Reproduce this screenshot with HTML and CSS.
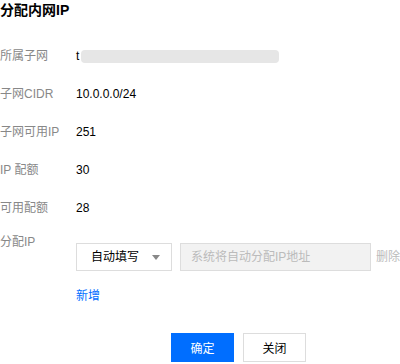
FILE: index.html
```html
<!DOCTYPE html>
<html lang="zh-CN">
<head>
    <meta charset="UTF-8">
    <meta name="viewport" content="width=device-width, initial-scale=1.0">
    <title>分配内网IP</title>
    <link rel="stylesheet" href="styles.css">
</head>
<body>

    <div class="dialog">
        <h2 class="dialog-title">分配内网IP</h2>

        <!-- Subnet info -->
        <div class="form-list">
            <div class="form-row">
                <label class="form-label">所属子网</label>
                <div class="form-value">t<span class="masked"></span></div>
            </div>
            <div class="form-row">
                <label class="form-label">子网CIDR</label>
                <div class="form-value">10.0.0.0/24</div>
            </div>
            <div class="form-row">
                <label class="form-label">子网可用IP</label>
                <div class="form-value">251</div>
            </div>
            <div class="form-row">
                <label class="form-label">IP 配额</label>
                <div class="form-value">30</div>
            </div>
            <div class="form-row">
                <label class="form-label">可用配额</label>
                <div class="form-value">28</div>
            </div>

            <!-- IP allocation -->
            <div class="form-row ip-row">
                <label class="form-label">分配IP</label>
                <div class="form-value">
                    <div class="ip-line">
                        <div class="select">
                            <span>自动填写</span>
                            <span class="caret"></span>
                        </div>
                        <input class="ip-input" type="text" placeholder="系统将自动分配IP地址" disabled>
                        <a class="link-gray">删除</a>
                    </div>
                    <a class="link-blue">新增</a>
                </div>
            </div>
        </div>

        <div class="dialog-footer">
            <button class="btn btn-primary">确定</button>
            <button class="btn">关闭</button>
        </div>
    </div>

</body>
</html>
```

FILE: styles.css
```css
body {
    font-family: Arial, "Liberation Sans", "Noto Sans CJK SC", sans-serif;
    font-size: 12px;
    color: #000;
    margin: 0;
    padding: 0;
    background: #fff;
}
.dialog {
    width: 400px;
}
.dialog-title {
    font-size: 14px;
    font-weight: bold;
    line-height: 20px;
    margin: 0;
    color: #000;
}
.form-list {
    margin-top: 27px;
}
.form-row {
    display: flex;
    line-height: 18px;
    margin-bottom: 20px;
}
.form-label {
    width: 76px;
    flex-shrink: 0;
    color: #888;
}
.form-value {
    color: #000;
    display: flex;
    align-items: center;
}
.masked {
    display: inline-block;
    width: 198px;
    height: 13px;
    margin-left: 2px;
    background: #e6e6e6;
    border-radius: 4px;
}
.ip-row {
    margin-bottom: 0;
}
.ip-row .form-label {
    margin-top: -4px;
}
.ip-row .form-value {
    display: block;
    padding-top: 6px;
}
.ip-line {
    display: flex;
    align-items: center;
}
.select {
    box-sizing: border-box;
    width: 96px;
    height: 28px;
    border: 1px solid #ddd;
    padding: 0 10px 0 14px;
    display: flex;
    align-items: center;
    justify-content: space-between;
    color: #000;
}
.caret {
    width: 0;
    height: 0;
    border-left: 4px solid transparent;
    border-right: 4px solid transparent;
    border-top: 5px solid #888;
    margin-right: 1px;
}
.ip-input {
    box-sizing: border-box;
    width: 191px;
    height: 28px;
    margin: 0 0 0 8px;
    padding: 0 10px;
    border: 1px solid #ddd;
    background: #f2f2f2;
    font-family: inherit;
    font-size: 12px;
}
.ip-input::placeholder {
    color: #bbb;
}
.link-gray {
    color: #bbb;
    margin-left: 5px;
}
.link-blue {
    display: block;
    color: #006eff;
    margin-top: 16px;
}
.dialog-footer {
    display: flex;
    gap: 9px;
    margin-top: 28px;
    padding-left: 171px;
}
.btn {
    box-sizing: border-box;
    width: 63px;
    height: 29px;
    border: 1px solid #ddd;
    background: #fff;
    color: #000;
    font-family: inherit;
    font-size: 12px;
}
.btn-primary {
    background: #006eff;
    border-color: #006eff;
    color: #fff;
}
```
